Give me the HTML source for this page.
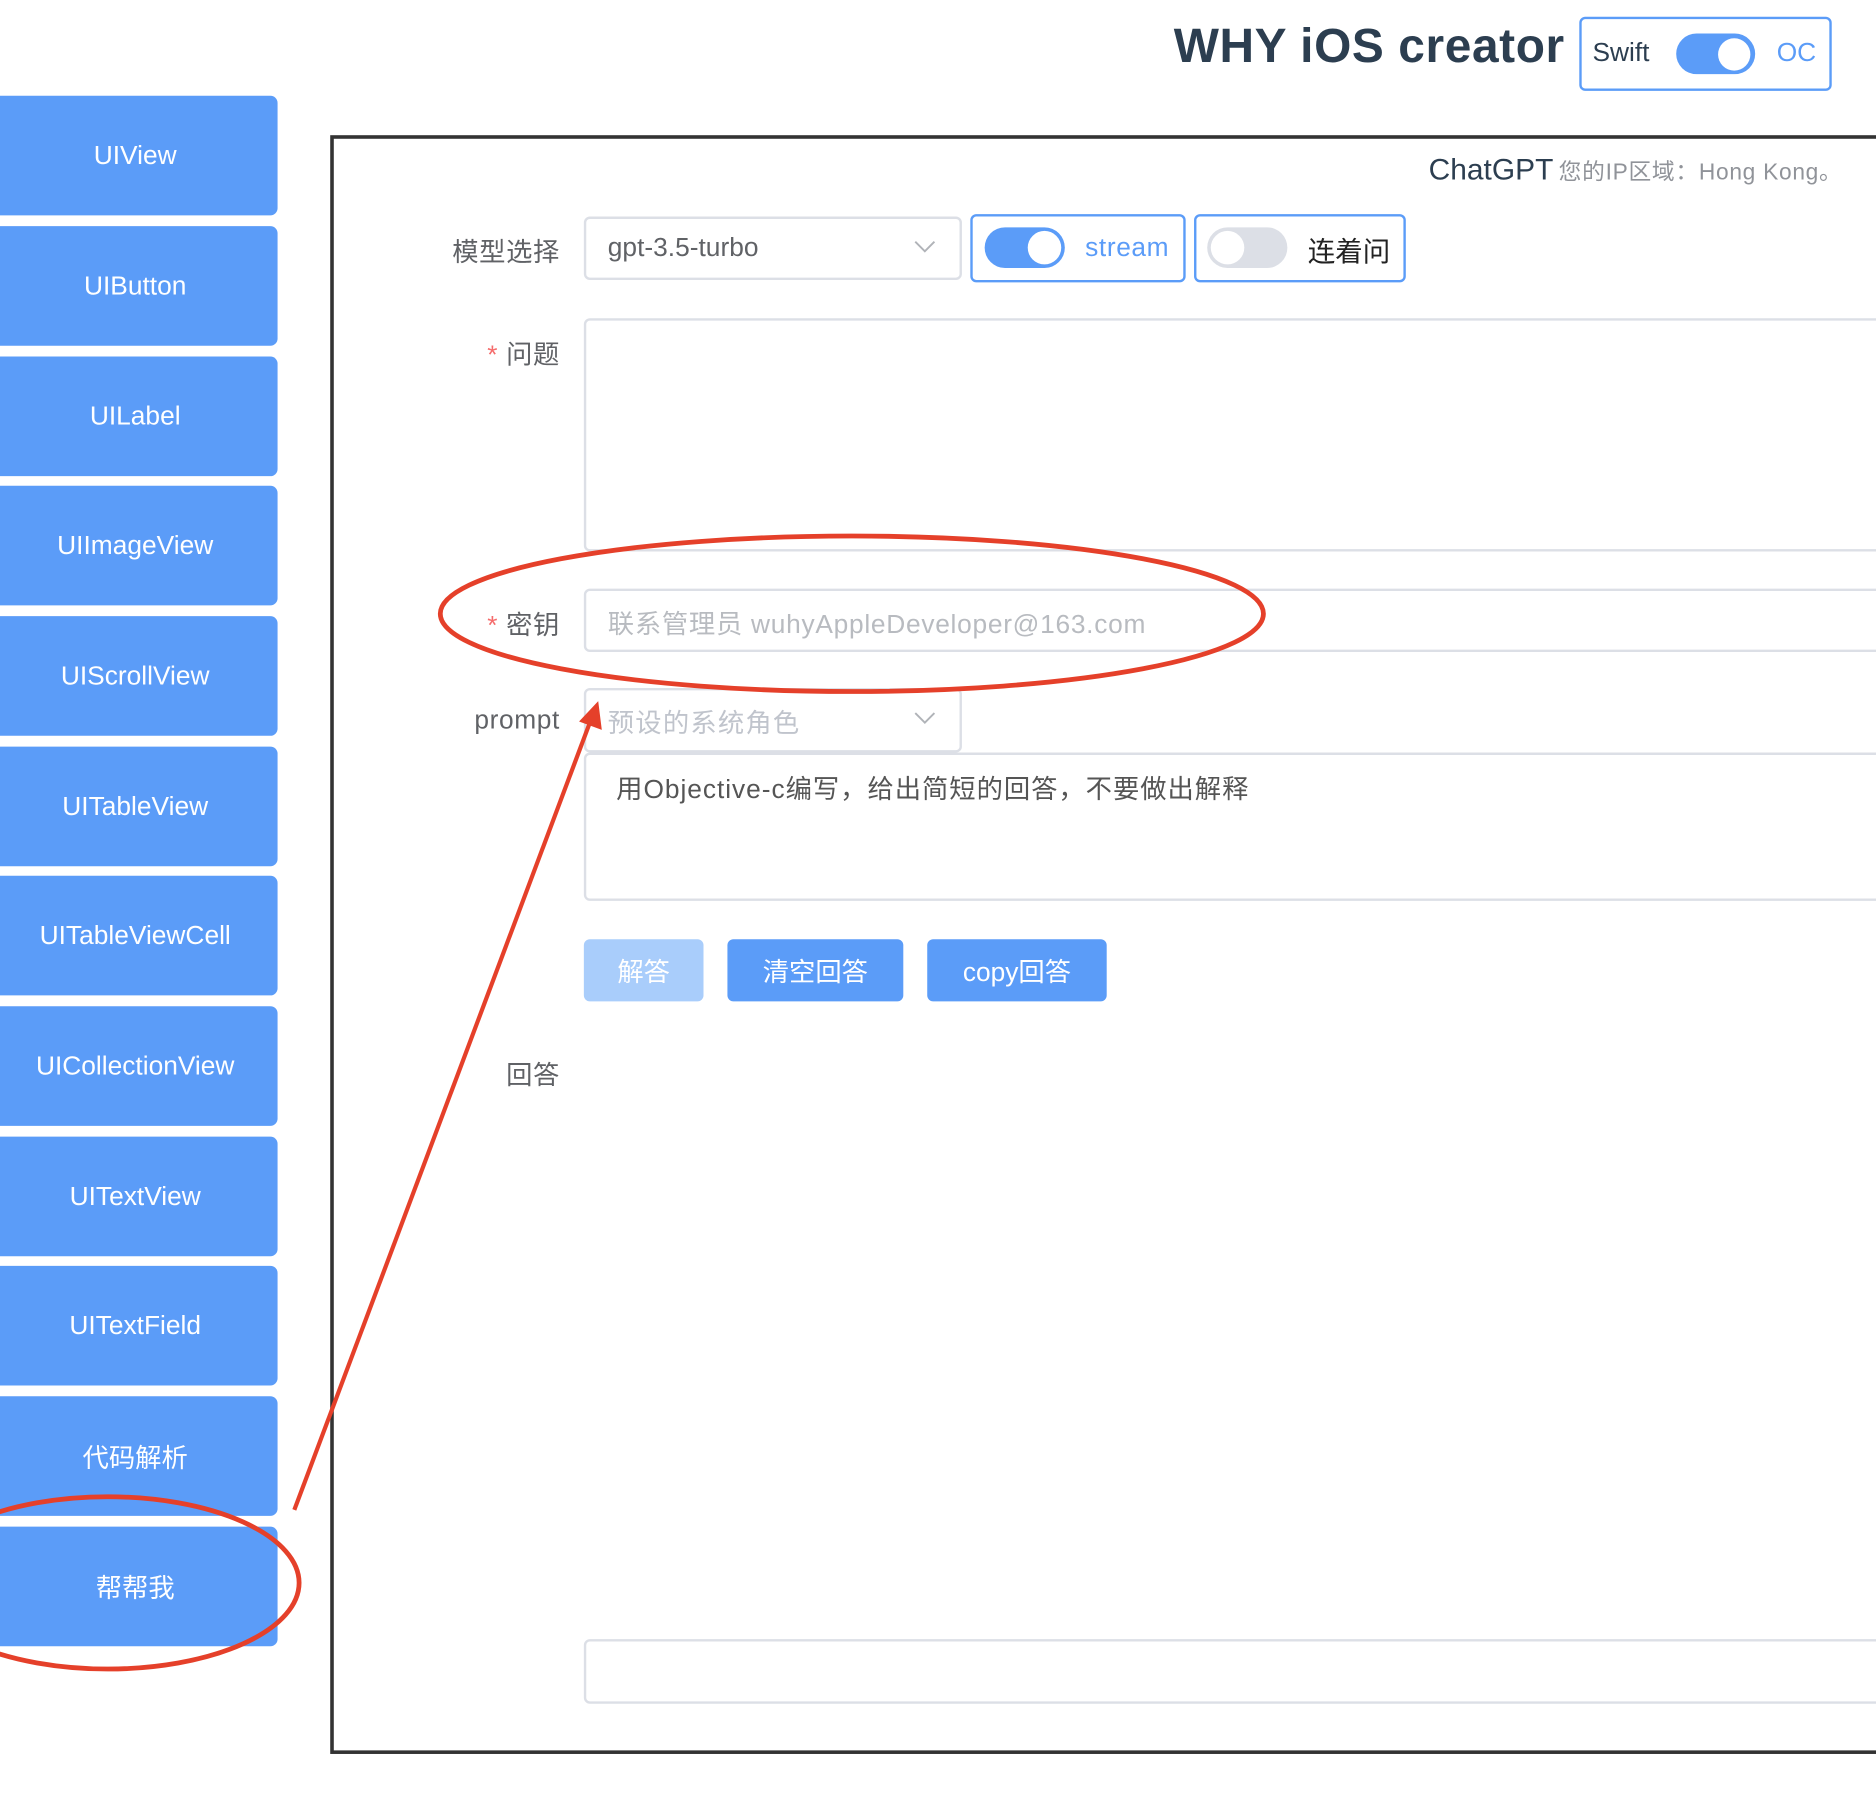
<!DOCTYPE html>
<html><head><meta charset="utf-8"><style>
html,body{margin:0;padding:0;background:#fff;overflow:hidden;width:1876px;height:1798px}
#s{position:absolute;left:0;top:0;width:1568px;height:1503px;transform:scale(1.19643);transform-origin:0 0;font-family:"Liberation Sans","Noto Sans CJK SC",sans-serif}
.a{position:absolute}
.nav{position:absolute;left:0;width:226px;padding-right:6px;height:100px;background:#5b9cf8;border-radius:0 6px 6px 0;color:#fff;font-size:22px;display:flex;align-items:center;justify-content:center}
.lbl{position:absolute;right:1100px;font-size:22px;color:#606266;text-align:right;letter-spacing:0.5px}
.in{position:absolute;border:2px solid #dcdfe6;border-radius:5px;box-sizing:border-box;background:#fff}
.btn{position:absolute;top:785px;height:52px;border-radius:5px;color:#fff;font-size:22px;display:flex;align-items:center;justify-content:center;background:#5b9cf8}
.sw{position:absolute;border-radius:16px}
</style></head><body><div id="s">
<div class="a" style="left:981px;top:17px;font-size:40px;font-weight:bold;color:#2c3e50;letter-spacing:0.5px">WHY iOS creator</div>
<div class="a" style="left:1320px;top:14px;width:211px;height:62px;border:2px solid #5b9cf8;border-radius:5px;box-sizing:border-box"></div>
<div class="a" style="left:1331px;top:31px;font-size:22px;color:#2c3e50">Swift</div>
<div class="sw" style="left:1401px;top:28px;width:66px;height:34px;background:#5b9cf8;border-radius:17px"></div>
<div class="a" style="left:1436px;top:32px;width:27px;height:27px;border-radius:50%;background:#fff"></div>
<div class="a" style="left:1485px;top:31px;font-size:22px;color:#5b9cf8">OC</div>

<div class="nav" style="top:80px">UIView</div>
<div class="nav" style="top:189px">UIButton</div>
<div class="nav" style="top:298px">UILabel</div>
<div class="nav" style="top:406px">UIImageView</div>
<div class="nav" style="top:515px">UIScrollView</div>
<div class="nav" style="top:624px">UITableView</div>
<div class="nav" style="top:732px">UITableViewCell</div>
<div class="nav" style="top:841px">UICollectionView</div>
<div class="nav" style="top:950px">UITextView</div>
<div class="nav" style="top:1058px">UITextField</div>
<div class="nav" style="top:1167px">代码解析</div>
<div class="nav" style="top:1276px">帮帮我</div>

<div class="a" style="left:276px;top:113px;width:1400px;height:1353px;border:3px solid #333;box-sizing:border-box"></div>
<div class="a" style="right:28px;top:128px;white-space:nowrap"><span style="font-size:25px;color:#2c3e50">ChatGPT</span> <span style="font-size:19px;color:#909399;letter-spacing:0.6px">您的IP区域：Hong Kong。</span></div>

<div class="lbl" style="top:193px">模型选择</div>
<div class="lbl" style="top:279px"><span style="color:#f56c6c">* </span>问题</div>
<div class="lbl" style="top:505px"><span style="color:#f56c6c">* </span>密钥</div>
<div class="lbl" style="top:589px">prompt</div>
<div class="lbl" style="top:881px">回答</div>

<div class="in" style="left:488px;top:181px;width:316px;height:53px"></div>
<div class="a" style="left:508px;top:194px;font-size:22px;color:#606266">gpt-3.5-turbo</div>
<svg class="a" style="left:763px;top:199px" width="20" height="14"><path d="M2 3 L10 11 L18 3" stroke="#b0b3b8" stroke-width="1.6" fill="none"/></svg>
<div class="a" style="left:811px;top:179px;width:180px;height:57px;border:2px solid #5b9cf8;border-radius:5px;box-sizing:border-box"></div>
<div class="a" style="left:823px;top:190px;width:67px;height:34px;border-radius:17px;background:#5b9cf8"></div>
<div class="a" style="left:859px;top:193px;width:28px;height:28px;border-radius:50%;background:#fff"></div>
<div class="a" style="left:907px;top:194px;font-size:22px;color:#5b9cf8;letter-spacing:0.5px">stream</div>
<div class="a" style="left:998px;top:179px;width:177px;height:57px;border:2px solid #5b9cf8;border-radius:5px;box-sizing:border-box"></div>
<div class="a" style="left:1009px;top:190px;width:67px;height:34px;border-radius:17px;background:#dcdfe6"></div>
<div class="a" style="left:1012px;top:193px;width:28px;height:28px;border-radius:50%;background:#fff"></div>
<div class="a" style="left:1093px;top:191px;font-size:23px;color:#222">连着问</div>

<div class="in" style="left:488px;top:266px;width:1200px;height:195px"></div>
<div class="in" style="left:488px;top:492px;width:1200px;height:53px"></div>
<div class="a" style="left:508px;top:504px;font-size:22px;color:#b8bbc0;letter-spacing:0.6px">联系管理员 wuhyAppleDeveloper@163.com</div>
<div class="in" style="left:488px;top:575px;width:316px;height:54px"></div>
<div class="a" style="left:508px;top:587px;font-size:22px;color:#c0c4cc;letter-spacing:1px">预设的系统角色</div>
<svg class="a" style="left:763px;top:593px" width="20" height="14"><path d="M2 3 L10 11 L18 3" stroke="#b0b3b8" stroke-width="1.6" fill="none"/></svg>
<div class="in" style="left:488px;top:629px;width:1200px;height:124px"></div>
<div class="a" style="left:515px;top:642px;font-size:22px;color:#555;letter-spacing:0.8px">用Objective-c编写，给出简短的回答，不要做出解释</div>

<div class="btn" style="left:488px;width:100px;background:#a9cdfb">解答</div>
<div class="btn" style="left:608px;width:147px">清空回答</div>
<div class="btn" style="left:775px;width:150px">copy回答</div>

<div class="in" style="left:488px;top:1370px;width:1200px;height:54px"></div>

<svg class="a" style="left:0;top:0" width="1568" height="1503">
<ellipse cx="712" cy="513" rx="344" ry="65" fill="none" stroke="#e5402a" stroke-width="4"/>
<ellipse cx="90" cy="1323" rx="160" ry="72" fill="none" stroke="#e5402a" stroke-width="4"/>
<line x1="246" y1="1262" x2="493" y2="604" stroke="#e5402a" stroke-width="3.5"/>
<polygon points="500,586 503,610 484,603" fill="#e5402a"/>
</svg>
</div></body></html>
